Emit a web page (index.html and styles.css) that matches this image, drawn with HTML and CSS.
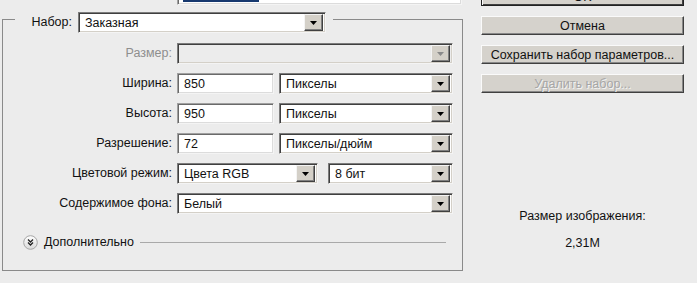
FILE: index.html
```html
<!DOCTYPE html>
<html lang="ru">
<head>
    <meta charset="UTF-8">
    <title>Новый</title>
    <link rel="stylesheet" href="styles.css">
</head>
<body>
    <div class="dialog">
        <div class="main">
            <div class="name-row">
                <label class="label">Имя:</label>
                <div class="field text-input name-input"><span class="selected">Без имени-1</span></div>
            </div>

            <fieldset class="preset">
                <legend class="preset-legend">
                    <label class="label preset-label">Набор:</label>
                    <div class="field select preset-select">
                        <span class="select-value">Заказная</span>
                        <span class="select-arrow"><svg width="7" height="4" viewBox="0 0 7 4"><path d="M0 0h7L3.5 4z" fill="#000"/></svg></span>
                    </div>
                </legend>

                <div class="form-grid">
                    <label class="label disabled">Размер:</label>
                    <div class="field select is-disabled">
                        <span class="select-value"></span>
                        <span class="select-arrow"><svg width="7" height="4" viewBox="0 0 7 4"><path d="M0 0h7L3.5 4z" fill="#8a8a8a"/></svg></span>
                    </div>

                    <label class="label">Ширина:</label>
                    <div class="field-pair">
                        <div class="field text-input num-input">850</div>
                        <div class="field select unit-select">
                            <span class="select-value">Пикселы</span>
                            <span class="select-arrow"><svg width="7" height="4" viewBox="0 0 7 4"><path d="M0 0h7L3.5 4z" fill="#000"/></svg></span>
                        </div>
                    </div>

                    <label class="label">Высота:</label>
                    <div class="field-pair">
                        <div class="field text-input num-input">950</div>
                        <div class="field select unit-select">
                            <span class="select-value">Пикселы</span>
                            <span class="select-arrow"><svg width="7" height="4" viewBox="0 0 7 4"><path d="M0 0h7L3.5 4z" fill="#000"/></svg></span>
                        </div>
                    </div>

                    <label class="label">Разрешение:</label>
                    <div class="field-pair">
                        <div class="field text-input num-input">72</div>
                        <div class="field select unit-select">
                            <span class="select-value">Пикселы/дюйм</span>
                            <span class="select-arrow"><svg width="7" height="4" viewBox="0 0 7 4"><path d="M0 0h7L3.5 4z" fill="#000"/></svg></span>
                        </div>
                    </div>

                    <label class="label">Цветовой режим:</label>
                    <div class="field-pair mode-pair">
                        <div class="field select mode-select">
                            <span class="select-value">Цвета RGB</span>
                            <span class="select-arrow"><svg width="7" height="4" viewBox="0 0 7 4"><path d="M0 0h7L3.5 4z" fill="#000"/></svg></span>
                        </div>
                        <div class="field select depth-select">
                            <span class="select-value">8 бит</span>
                            <span class="select-arrow"><svg width="7" height="4" viewBox="0 0 7 4"><path d="M0 0h7L3.5 4z" fill="#000"/></svg></span>
                        </div>
                    </div>

                    <label class="label">Содержимое фона:</label>
                    <div class="field select">
                        <span class="select-value">Белый</span>
                        <span class="select-arrow"><svg width="7" height="4" viewBox="0 0 7 4"><path d="M0 0h7L3.5 4z" fill="#000"/></svg></span>
                    </div>
                </div>

                <div class="advanced">
                    <span class="advanced-icon">
                        <svg width="15" height="15" viewBox="0 0 15 15">
                            <defs>
                                <linearGradient id="knob" x1="0" y1="0" x2="0" y2="1">
                                    <stop offset="0" stop-color="#ffffff"/>
                                    <stop offset="1" stop-color="#d9d9d9"/>
                                </linearGradient>
                            </defs>
                            <circle cx="7.5" cy="7.5" r="6.8" fill="url(#knob)" stroke="#a5a5a5" stroke-width="1"/>
                            <path d="M5 4.5l2.5 2.5 2.5-2.5M5 7.5l2.5 2.5 2.5-2.5" fill="none" stroke="#222" stroke-width="1.3"/>
                        </svg>
                    </span>
                    <span class="advanced-text">Дополнительно</span>
                    <span class="advanced-line"></span>
                </div>
            </fieldset>
        </div>

        <div class="side">
            <div class="buttons">
                <button type="button" class="button default">OK</button>
                <button type="button" class="button">Отмена</button>
                <button type="button" class="button">Сохранить набор параметров...</button>
                <button type="button" class="button" disabled>Удалить набор...</button>
            </div>
            <div class="size-info">
                <div class="size-label">Размер изображения:</div>
                <div class="size-value">2,31M</div>
            </div>
        </div>
    </div>
</body>
</html>
```

FILE: styles.css
```css
* {
    margin: 0;
    padding: 0;
    box-sizing: border-box;
}

body {
    font-family: 'Liberation Sans', Arial, sans-serif;
    font-size: 12.5px;
    color: #111;
    background-color: #ececec;
    overflow: hidden;
}

.dialog {
    display: flex;
    margin-top: -16px;
}

.main {
    width: 465px;
}

.label {
    text-align: right;
    line-height: 21px;
    white-space: nowrap;
}

.label.disabled {
    color: #8e8e8e;
}

/* sunken fields */
.field {
    height: 21px;
    background-color: #fff;
    border: 1px solid;
    border-color: #7c7c7c #f4f4f4 #f4f4f4 #7c7c7c;
    box-shadow: inset 1px 1px 0 #3f3f3f, inset -1px -1px 0 #d4d0c8;
    display: flex;
    align-items: center;
    padding-left: 6px;
    white-space: nowrap;
}

.text-input {
    border-color: #a0a0a0 #f4f4f4 #f4f4f4 #a0a0a0;
    box-shadow: inset 1px 1px 0 #6a6a6a, inset -1px -1px 0 #dcdcdc;
}

.select {
    padding-right: 2px;
}

.select-value {
    flex: 1;
}

.select-arrow {
    width: 19px;
    height: 17px;
    background-color: #d4d0c8;
    border: 1px solid;
    border-color: #f4f4f4 #404040 #404040 #f4f4f4;
    box-shadow: inset -1px -1px 0 #808080;
    display: flex;
    align-items: center;
    justify-content: center;
}

.select.is-disabled {
    background-color: #ececec;
}

/* name row, cut by the top edge */
.name-row {
    display: grid;
    grid-template-columns: 173px 285px;
    column-gap: 4px;
}

.name-input {
    padding-left: 5px;
}

.selected {
    background-color: #17396f;
    color: #fff;
    padding: 0 2px;
    line-height: 15px;
}

/* preset group */
.preset {
    margin: 1px 0 0 2px;
    width: 461px;
    border: 1px solid #8a8a8a;
    padding: 10px 8px 20px 0;
}

.preset-legend {
    display: flex;
    gap: 6px;
    margin-left: 12px;
    padding: 6px 7px 0 0;
}

.preset-label {
    width: 57px;
}

.preset-select {
    width: 248px;
}

.form-grid {
    display: grid;
    grid-template-columns: 169px 276px;
    column-gap: 5px;
    row-gap: 9px;
}

.field-pair {
    display: flex;
    gap: 5px;
}

.num-input {
    width: 97px;
}

.unit-select {
    flex: 1;
}

.mode-pair {
    gap: 10px;
}

.mode-select {
    width: 141px;
}

.depth-select {
    flex: 1;
}

.advanced {
    display: flex;
    align-items: center;
    margin-top: 20px;
    padding-left: 20px;
    height: 16px;
}

.advanced-icon {
    display: flex;
    width: 15px;
    height: 15px;
}

.advanced-text {
    margin-left: 6px;
}

.advanced-line {
    flex: 1;
    height: 1px;
    background-color: #a9a9a9;
    margin: 0 8px 0 6px;
}

/* right column */
.side {
    margin-left: 16px;
    width: 203px;
    padding-top: 3px;
}

.buttons {
    display: flex;
    flex-direction: column;
    gap: 10px;
}

.button {
    height: 19px;
    font-family: inherit;
    font-size: 12.5px;
    color: #111;
    background-color: #d5d2cc;
    border: 1px solid;
    border-color: #fafafa #404040 #404040 #fafafa;
    box-shadow: inset -1px -1px 0 #888;
}

.button.default {
    border-color: #222;
    box-shadow: inset 1px 1px 0 #fafafa, inset -1px -1px 0 #404040;
}

.button:disabled {
    color: #a6a6a6;
    text-shadow: 1px 1px 0 #f4f4f4;
}

.size-info {
    margin-top: 116px;
    text-align: center;
    line-height: 15px;
}

.size-value {
    margin-top: 12px;
}
```
